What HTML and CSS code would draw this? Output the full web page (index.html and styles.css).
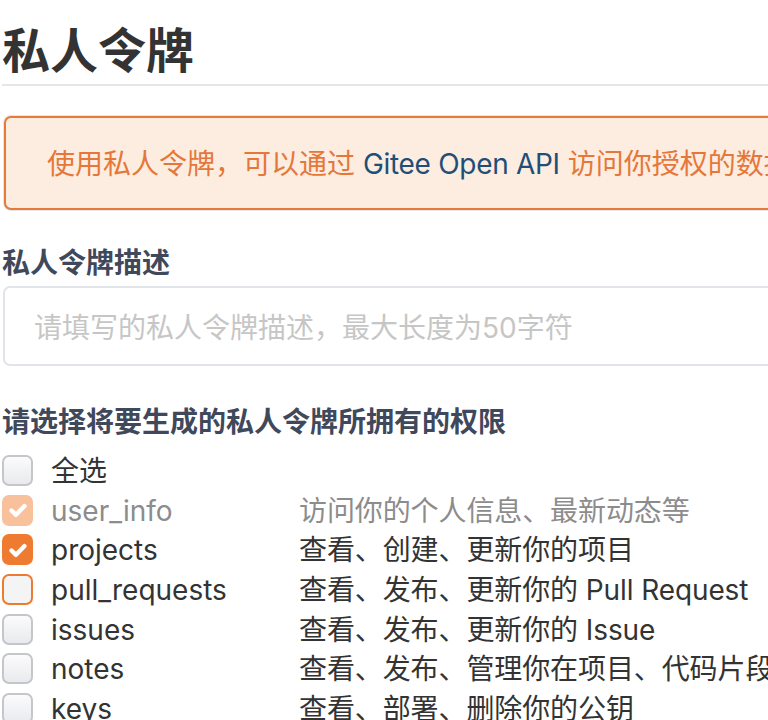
FILE: index.html
```html
<!DOCTYPE html>
<html lang="zh-CN">
<head>
<meta charset="utf-8">
<title>私人令牌</title>
<link rel="stylesheet" href="styles.css">
</head>
<body>
<div class="page">
  <h1 class="title">私人令牌</h1>
  <div class="alert">使用私人令牌，可以通过 <span class="alert-link">Gitee Open API</span> 访问你授权的数据。</div>

  <div class="field-label">私人令牌描述</div>
  <div class="input">请填写的私人令牌描述，最大长度为50字符</div>

  <div class="field-label perms-label">请选择将要生成的私人令牌所拥有的权限</div>
  <div class="perms">
    <div class="row">
      <span class="cb"></span>
      <span class="name">全选</span>
      <span class="desc"></span>
    </div>
    <div class="row muted">
      <span class="cb cb-disabled"><svg viewBox="0 0 30 30"><path d="M8.5 15.5l4.5 4.3L21.5 11"/></svg></span>
      <span class="name">user_info</span>
      <span class="desc">访问你的个人信息、最新动态等</span>
    </div>
    <div class="row">
      <span class="cb cb-checked"><svg viewBox="0 0 30 30"><path d="M8.5 15.5l4.5 4.3L21.5 11"/></svg></span>
      <span class="name">projects</span>
      <span class="desc">查看、创建、更新你的项目</span>
    </div>
    <div class="row">
      <span class="cb cb-focus"></span>
      <span class="name">pull_requests</span>
      <span class="desc">查看、发布、更新你的 Pull Request</span>
    </div>
    <div class="row">
      <span class="cb"></span>
      <span class="name">issues</span>
      <span class="desc">查看、发布、更新你的 Issue</span>
    </div>
    <div class="row">
      <span class="cb"></span>
      <span class="name">notes</span>
      <span class="desc">查看、发布、管理你在项目、代码片段中的评论</span>
    </div>
    <div class="row">
      <span class="cb"></span>
      <span class="name">keys</span>
      <span class="desc">查看、部署、删除你的公钥</span>
    </div>
  </div>
</div>
</body>
</html>
```

FILE: styles.css
```css
html, body {
  margin: 0;
  padding: 0;
  overflow: hidden;
  background: #ffffff;
}

body {
  font-family: Inter, "Noto Sans CJK SC", sans-serif;
  color: #333333;
}

.page {
  width: 1100px;
  margin-left: 2px;
  display: flex;
  flex-direction: column;
}

.title {
  margin: 20px 0 0;
  padding: 0 0 10px;
  font-size: 48px;
  line-height: 54px;
  font-weight: 700;
  color: #333333;
  border-bottom: 2px solid #e6e6e6;
  font-family: "Noto Sans CJK SC", sans-serif;
}

.alert {
  margin: 30px 0 0 2px;
  padding: 26px 0 24px 41px;
  border: 2px solid #e57a3b;
  border-radius: 7px;
  box-shadow: 0 0 0 1px #e3e6ea;
  background: #fcede0;
  color: #e5773a;
  font-size: 28px;
  line-height: 40px;
  white-space: nowrap;
}

.alert-link {
  color: #1f4f78;
  letter-spacing: -0.3px;
}

.field-label {
  margin-top: 31px;
  font-size: 28px;
  line-height: 40px;
  font-weight: 700;
  color: #40485b;
  font-family: "Noto Sans CJK SC", sans-serif;
}

.input {
  margin: 5px 0 0 1px;
  height: 76px;
  border: 2px solid #e1e4e8;
  border-radius: 7px;
  padding-left: 29px;
  font-size: 28px;
  line-height: 80px;
  color: #c6c6c6;
}

.perms-label {
  margin-top: 34px;
}

.perms {
  margin-top: 12px;
  display: flex;
  flex-direction: column;
}

.row {
  display: grid;
  grid-template-columns: 31px 230px auto;
  column-gap: 18px;
  align-items: center;
  height: 39.7px;
  font-size: 28px;
  line-height: 39.7px;
  color: #333333;
  white-space: nowrap;
}

.row.muted .name,
.row.muted .desc {
  color: #8c8c8c;
}

.desc {
  letter-spacing: -0.1px;
}

.cb {
  box-sizing: border-box;
  width: 31px;
  height: 31px;
  margin-top: -3px;
  border: 2px solid #c4c6ca;
  border-radius: 7px;
  background: linear-gradient(#fbfbfc, #e9eaed);
  display: flex;
  align-items: center;
  justify-content: center;
}

.cb svg {
  width: 30px;
  height: 30px;
  fill: none;
  stroke: #ffffff;
  stroke-width: 4.4;
  stroke-linecap: round;
  stroke-linejoin: round;
}

.cb-checked {
  border: none;
  background: #ef7b31;
}

.cb-disabled {
  border: none;
  background: #f8c09b;
}

.cb-focus {
  border-color: #ec7a31;
  background: #f4f4f4;
}
```
